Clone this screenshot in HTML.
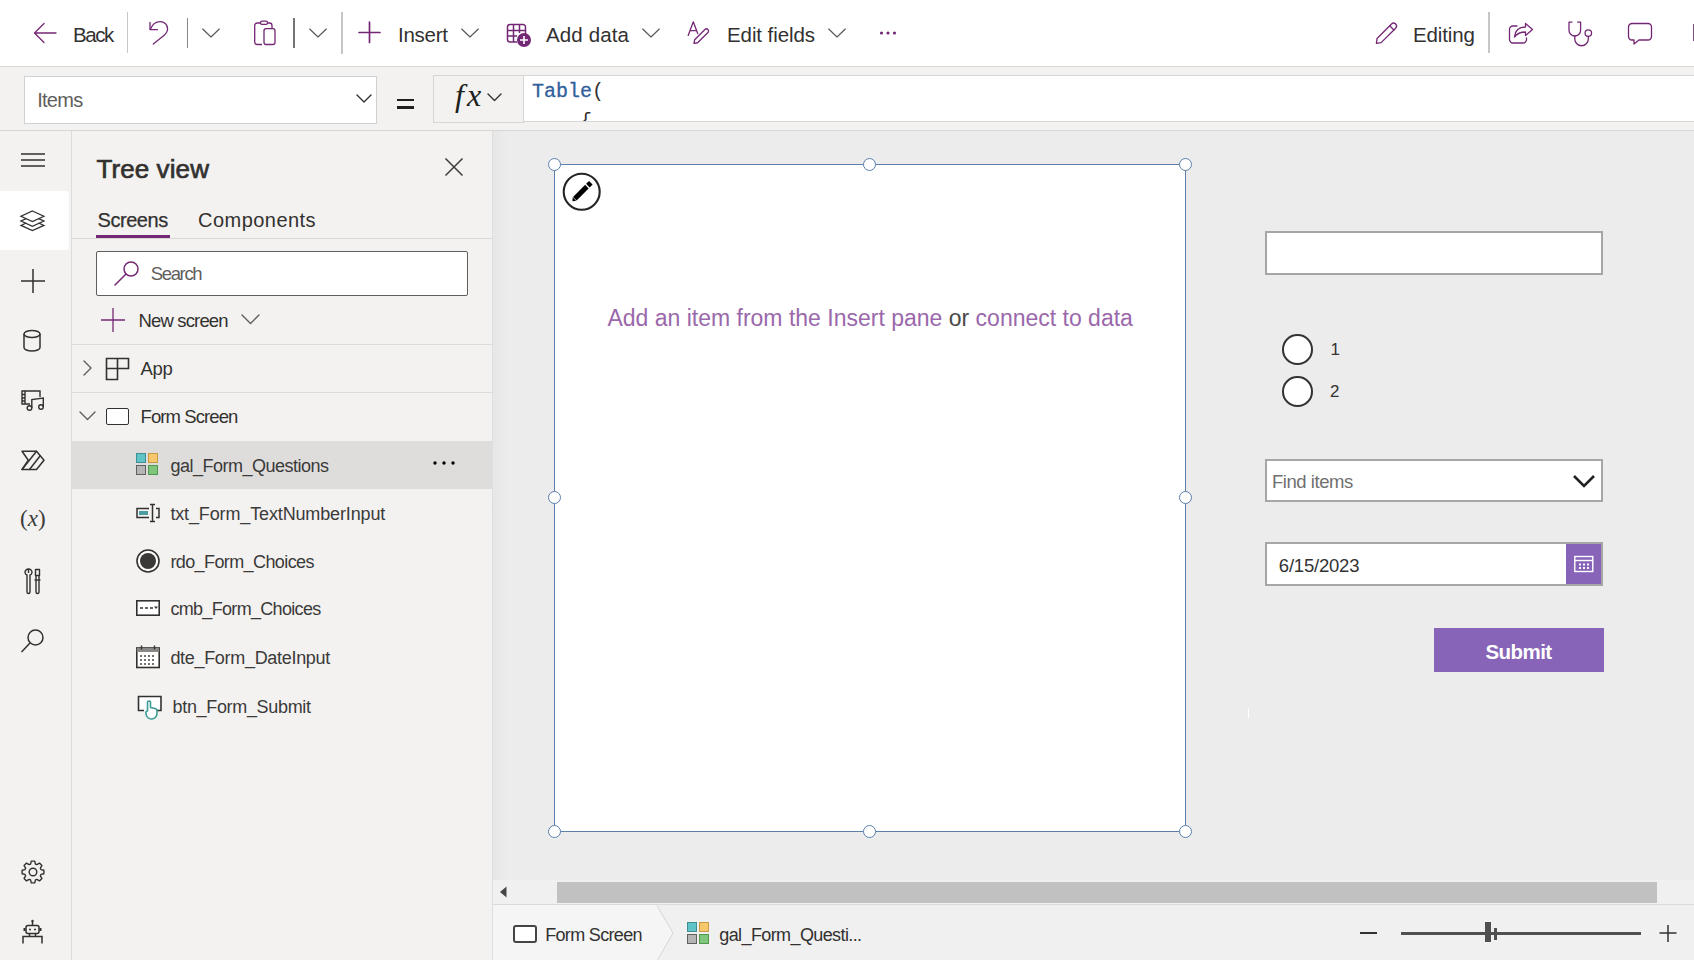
<!DOCTYPE html>
<html><head><meta charset="utf-8"><style>
html,body{margin:0;padding:0;}
body{width:1694px;height:960px;position:relative;overflow:hidden;background:#f3f2f1;font-family:"Liberation Sans",sans-serif;}
.r{position:absolute;box-sizing:content-box;}
.t{position:absolute;white-space:nowrap;line-height:1;}
svg.r{overflow:visible;}
</style></head><body>
<div class="r" style="left:0;top:0;width:1694px;height:66px;background:#fff"></div>
<div class="r" style="left:0;top:66px;width:1694px;height:1px;background:#d6d6d6"></div>
<div class="r" style="left:0;top:67px;width:1694px;height:63px;background:#f3f2f1"></div>
<div class="r" style="left:0;top:130px;width:1694px;height:1px;background:#d6d6d6"></div>
<div class="r" style="left:0;top:131px;width:71px;height:829px;background:#f3f2f1"></div>
<div class="r" style="left:71px;top:131px;width:1px;height:829px;background:#dcdcdc"></div>
<div class="r" style="left:72px;top:131px;width:420px;height:829px;background:#f3f2f1"></div>
<div class="r" style="left:492px;top:131px;width:1202px;height:829px;background:#ececec"></div>
<svg class="r" style="left:30px;top:18px;" width="30" height="30" viewBox="0 0 30 30" ><g fill="none" stroke="#742774" stroke-width="1.3" stroke-linecap="round" stroke-linejoin="round"><path d="M4.5 15H26M4.5 15L14 5.5M4.5 15L14 24.5"/></g></svg>
<div class="t" style="left:73.00px;top:24.64px;font-size:20.5px;color:#323130;font-weight:normal;font-family:'Liberation Sans', sans-serif;letter-spacing:-1.405px;">Back</div>
<div class="r" style="left:127px;top:12px;width:1px;height:41px;background:#c8c6c4"></div>
<svg class="r" style="left:145px;top:18px;" width="28" height="30" viewBox="0 0 28 30" ><g fill="none" stroke="#742774" stroke-width="1.3" stroke-linecap="round" stroke-linejoin="round"><path d="M5 4.3V11.7H12.5"/><path d="M5.5 11C7.5 6 11 3.6 15.2 3.6C19.5 3.6 22.6 7 22.6 11C22.6 13.5 21.6 15 19.5 17L8.3 26"/></g></svg>
<div class="r" style="left:187px;top:18px;width:1px;height:30px;background:#8a8886"></div>
<svg class="r" style="left:200px;top:26px;" width="22" height="14" viewBox="0 0 22 14" ><path d="M2.7 3L11 11L19.3 3" fill="none" stroke="#5a5856" stroke-width="1.15" stroke-linecap="round" stroke-linejoin="round"/></svg>
<svg class="r" style="left:250px;top:18px;" width="30" height="30" viewBox="0 0 30 30" ><g fill="none" stroke="#742774" stroke-width="1.3" stroke-linejoin="round"><path d="M10.5 5H7.2A2.5 2.5 0 0 0 4.7 7.5V24A2.5 2.5 0 0 0 7.2 26.5H12"/><path d="M17.5 5H19.5A2.5 2.5 0 0 1 22 7.5V10.5"/><rect x="10.5" y="3.2" width="7" height="3.2" rx="1.4"/><rect x="14" y="10.6" width="11" height="15.9" rx="2.2"/></g></svg>
<div class="r" style="left:293px;top:18px;width:2px;height:30px;background:#747474"></div>
<svg class="r" style="left:307px;top:26px;" width="22" height="14" viewBox="0 0 22 14" ><path d="M2.7 3L11 11L19.3 3" fill="none" stroke="#5a5856" stroke-width="1.15" stroke-linecap="round" stroke-linejoin="round"/></svg>
<div class="r" style="left:341px;top:12px;width:2px;height:42px;background:#c8c6c4"></div>
<svg class="r" style="left:355px;top:18px;" width="30" height="30" viewBox="0 0 30 30" ><g fill="none" stroke="#742774" stroke-width="1.7" stroke-linecap="round"><path d="M14.5 4V24.5M4 14.5H25"/></g></svg>
<div class="t" style="left:398.00px;top:24.64px;font-size:20.5px;color:#323130;font-weight:normal;font-family:'Liberation Sans', sans-serif;letter-spacing:-0.25px;">Insert</div>
<svg class="r" style="left:459px;top:26px;" width="22" height="14" viewBox="0 0 22 14" ><path d="M2.7 3L11 11L19.3 3" fill="none" stroke="#5a5856" stroke-width="1.15" stroke-linecap="round" stroke-linejoin="round"/></svg>
<svg class="r" style="left:504px;top:20px;" width="32" height="30" viewBox="0 0 32 30" ><g fill="none" stroke="#742774" stroke-width="1.5"><path d="M6 4.5H19A2.5 2.5 0 0 1 21.5 7V14M13 22H6A2.5 2.5 0 0 1 3.5 19.5V7A2.5 2.5 0 0 1 6 4.5M3.5 10.5H21.5M3.5 16H13M9.5 4.5V22M15.5 4.5V13"/></g><circle cx="20" cy="20" r="7" fill="#742774"/><path d="M20 16V24M16 20H24" stroke="#fff" stroke-width="1.6"/></svg>
<div class="t" style="left:546.00px;top:24.64px;font-size:20.5px;color:#323130;font-weight:normal;font-family:'Liberation Sans', sans-serif;letter-spacing:0.128px;">Add data</div>
<svg class="r" style="left:640px;top:26px;" width="22" height="14" viewBox="0 0 22 14" ><path d="M2.7 3L11 11L19.3 3" fill="none" stroke="#5a5856" stroke-width="1.15" stroke-linecap="round" stroke-linejoin="round"/></svg>
<svg class="r" style="left:685px;top:18px;" width="30" height="30" viewBox="0 0 30 30" ><g fill="none" stroke="#742774" stroke-width="1.3" stroke-linecap="round" stroke-linejoin="round"><path d="M3.2 17.4L8.3 3.8L12.7 15.6M5 12.7H11"/><path d="M0 0L3 -2.1H17.6A2.1 2.1 0 0 1 17.6 2.1H3Z" transform="translate(9 25.4) rotate(-45)"/></g></svg>
<div class="t" style="left:727.00px;top:24.64px;font-size:20.5px;color:#323130;font-weight:normal;font-family:'Liberation Sans', sans-serif;letter-spacing:-0.087px;">Edit fields</div>
<svg class="r" style="left:826px;top:26px;" width="22" height="14" viewBox="0 0 22 14" ><path d="M2.7 3L11 11L19.3 3" fill="none" stroke="#5a5856" stroke-width="1.15" stroke-linecap="round" stroke-linejoin="round"/></svg>
<svg class="r" style="left:878px;top:29px;" width="20" height="8" viewBox="0 0 20 8" ><g fill="#742774"><circle cx="3.5" cy="4" r="1.6"/><circle cx="10" cy="4" r="1.6"/><circle cx="16.5" cy="4" r="1.6"/></g></svg>
<svg class="r" style="left:1372px;top:18px;" width="30" height="30" viewBox="0 0 30 30" ><g fill="none" stroke="#742774" stroke-width="1.3" stroke-linecap="round" stroke-linejoin="round" transform="translate(4.4 25.3) rotate(-45)"><path d="M0 0L3.8 -2.9H24.3A2.9 2.9 0 0 1 24.3 2.9H3.8Z"/><path d="M21.8 -2.9V2.9"/></g></svg>
<div class="t" style="left:1413.00px;top:24.64px;font-size:20.5px;color:#323130;font-weight:normal;font-family:'Liberation Sans', sans-serif;letter-spacing:-0.122px;">Editing</div>
<div class="r" style="left:1488px;top:12px;width:2px;height:41px;background:#c8c6c4"></div>
<svg class="r" style="left:1506px;top:18px;" width="30" height="30" viewBox="0 0 30 30" ><g fill="none" stroke="#742774" stroke-width="1.3" stroke-linecap="round" stroke-linejoin="round"><path d="M11 8H7A3.5 3.5 0 0 0 3.5 11.5V21.5A3.5 3.5 0 0 0 7 25H17A3.5 3.5 0 0 0 20.5 21.5V20"/><path d="M19.5 5.5L26.5 11.5L19.5 17.5V14C14.5 14 11 15.5 8.5 19C9 12.5 12.5 9 19.5 9Z"/></g></svg>
<svg class="r" style="left:1565px;top:18.7px;" width="30" height="30" viewBox="0 0 30 30" ><g fill="none" stroke="#742774" stroke-width="1.3" stroke-linecap="round" stroke-linejoin="round"><path d="M7 3.1H4V11.2A5.8 5.8 0 0 0 15.6 11.2V3.1H12.6"/><path d="M9.8 17V20A6.75 6.75 0 0 0 23.3 20V17.4"/><circle cx="23.3" cy="14.1" r="3.25"/></g></svg>
<svg class="r" style="left:1625px;top:18px;" width="30" height="30" viewBox="0 0 30 30" ><path d="M7 5.5H23A3.5 3.5 0 0 1 26.5 9V18.5A3.5 3.5 0 0 1 23 22H14L9 26V22H7A3.5 3.5 0 0 1 3.5 18.5V9A3.5 3.5 0 0 1 7 5.5Z" fill="none" stroke="#742774" stroke-width="1.3" stroke-linejoin="round"/></svg>
<div class="r" style="left:1692.5px;top:24px;width:1.5px;height:17px;background:#7d4a7d"></div>
<div class="r" style="left:24px;top:76px;width:351px;height:46px;background:#fff;border:1px solid #d1d1d1"></div>
<div class="t" style="left:37.20px;top:90.07px;font-size:20px;color:#605e5c;font-weight:normal;font-family:'Liberation Sans', sans-serif;letter-spacing:-0.725px;">Items</div>
<svg class="r" style="left:354px;top:92px;" width="20" height="14" viewBox="0 0 20 14" ><path d="M3 3L10 10L17 3" fill="none" stroke="#323130" stroke-width="1.4" stroke-linecap="round" stroke-linejoin="round"/></svg>
<div class="r" style="left:397px;top:98.5px;width:17px;height:2.6px;background:#201f1e"></div>
<div class="r" style="left:397px;top:106px;width:17px;height:2.6px;background:#201f1e"></div>
<div class="r" style="left:433px;top:75px;width:89px;height:46px;background:#f3f2f1;border:1px solid #d6d6d6"></div>
<div class="t" style="left:455px;top:79px;font-family:'Liberation Serif',serif;font-style:italic;font-size:32px;color:#201f1e;line-height:1;letter-spacing:3px">fx</div>
<svg class="r" style="left:485px;top:91px;" width="20" height="14" viewBox="0 0 20 14" ><path d="M3 3L9.5 9.5L16 3" fill="none" stroke="#323130" stroke-width="1.4" stroke-linecap="round" stroke-linejoin="round"/></svg>
<div class="r" style="left:523px;top:75px;width:1171px;height:45px;background:#fff;border-top:1px solid #d6d6d6;border-bottom:1px solid #d6d6d6;border-left:1px solid #d6d6d6;overflow:hidden"><div class="t" style="left:8px;top:5.5px;font-family:'Liberation Mono',monospace;font-size:20px;line-height:1"><span style="color:#30609c;-webkit-text-stroke:0.3px #30609c">Table</span><span style="color:#323130">(</span></div><div class="t" style="left:56px;top:36px;font-family:'Liberation Mono',monospace;font-size:20px;line-height:1;color:#323130">{</div></div>
<svg class="r" style="left:20px;top:152px;" width="26" height="16" viewBox="0 0 26 16" ><path d="M1 2H25M1 8H25M1 14H25" stroke="#323130" stroke-width="1.3"/></svg>
<div class="r" style="left:0;top:191px;width:69px;height:59px;background:#fff;border-radius:0 4px 4px 0"></div>
<svg class="r" style="left:19px;top:208px;" width="28" height="26" viewBox="0 0 28 26" ><g fill="none" stroke="#323130" stroke-width="1.3" stroke-linejoin="miter"><path d="M13.4 3L24.9 8.25L13.4 13.5L2 8.25Z"/><path d="M7.2 10.6L2 13L13.4 18.25L24.9 13L19.6 10.6"/><path d="M7.2 15L2 17.4L13.4 22.65L24.9 17.4L19.6 15"/></g></svg>
<svg class="r" style="left:19px;top:267px;" width="28" height="28" viewBox="0 0 28 28" ><path d="M14 2V26M2 14H26" stroke="#323130" stroke-width="1.5"/></svg>
<svg class="r" style="left:21px;top:328px;" width="22" height="26" viewBox="0 0 22 26" ><g fill="none" stroke="#323130" stroke-width="1.5"><ellipse cx="11" cy="6" rx="8" ry="3.5"/><path d="M3 6V19.5C3 21.5 6.5 23 11 23C15.5 23 19 21.5 19 19.5V6"/></g></svg>
<svg class="r" style="left:19px;top:388px;" width="28" height="26" viewBox="0 0 28 26" ><g fill="none" stroke="#323130" stroke-width="1.4"><path d="M11 16H3V3H21V9"/><path d="M6 3V16M3 6.5H6M3 10H6M3 13H6"/><circle cx="10.5" cy="20" r="2.3"/><circle cx="22" cy="19" r="2.3"/><path d="M12.8 20V11.5L24.3 10V19"/></g></svg>
<svg class="r" style="left:19px;top:449px;" width="28" height="24" viewBox="0 0 28 24" ><g fill="none" stroke="#323130" stroke-width="1.5" stroke-linejoin="round" stroke-linecap="round"><path d="M3 2.3H17.5L25 11.2L17.5 20.5H3L9.3 11.2Z"/><path d="M17.5 2.3L3 20.5M21.2 6.8L10.5 20.5"/></g></svg>
<div class="t" style="left:20px;top:506.5px;font-family:'Liberation Serif',serif;font-size:23px;color:#3b3a39;line-height:1">(<i>x</i>)</div>
<svg class="r" style="left:22px;top:566px;" width="22" height="30" viewBox="0 0 22 30" ><g fill="none" stroke="#323130" stroke-width="1.4" stroke-linejoin="round"><path d="M5 9A3 3 0 0 1 3 6.5A3.5 3.5 0 0 1 6.5 3A3.5 3.5 0 0 1 10 6.5A3 3 0 0 1 8 9V26A1.5 1.5 0 0 1 5 26Z"/><path d="M6.5 3V7"/><path d="M13.5 3.5H17.5V9.5H13.5Z"/><path d="M14 9.5V26A1.5 1.5 0 0 0 17 26V9.5"/><path d="M12.5 14H18.5"/></g></svg>
<svg class="r" style="left:19px;top:627px;" width="28" height="28" viewBox="0 0 28 28" ><g fill="none" stroke="#323130" stroke-width="1.5"><circle cx="16.5" cy="10.5" r="7.5"/><path d="M11 16L2.5 25"/></g></svg>
<svg class="r" style="left:17.5px;top:857px;" width="30" height="30" viewBox="0 0 30 30" ><g fill="none" stroke="#323130" stroke-width="1.4" stroke-linejoin="round"><path d="M22.94 12.57 L25.86 13.28 L25.86 16.72 L22.94 17.43 L22.33 18.90 L23.90 21.47 L21.47 23.90 L18.90 22.33 L17.43 22.94 L16.72 25.86 L13.28 25.86 L12.57 22.94 L11.10 22.33 L8.53 23.90 L6.10 21.47 L7.67 18.90 L7.06 17.43 L4.14 16.72 L4.14 13.28 L7.06 12.57 L7.67 11.10 L6.10 8.53 L8.53 6.10 L11.10 7.67 L12.57 7.06 L13.28 4.14 L16.72 4.14 L17.43 7.06 L18.90 7.67 L21.47 6.10 L23.90 8.53 L22.33 11.10Z"/><circle cx="15" cy="15" r="3.8"/></g></svg>
<svg class="r" style="left:19px;top:918px;" width="28" height="28" viewBox="0 0 28 28" ><g fill="none" stroke="#323130" stroke-width="1.5"><path d="M13.5 3V7.5"/><rect x="7" y="7.5" width="13" height="8" rx="2"/><path d="M4 25.5V18.5H23V25.5"/><path d="M10.5 15.5V18.5M16.5 15.5V18.5"/></g><circle cx="13.5" cy="3" r="1.2" fill="#323130"/><circle cx="11" cy="11.5" r="1" fill="#323130"/><circle cx="16" cy="11.5" r="1" fill="#323130"/><path d="M5.5 10V13M21.5 10V13" stroke="#323130" stroke-width="2"/></svg>
<div class="t" style="left:96.40px;top:155.99px;font-size:26px;color:#323130;font-weight:normal;font-family:'Liberation Sans', sans-serif;letter-spacing:0.1px;-webkit-text-stroke:0.7px #323130;">Tree view</div>
<svg class="r" style="left:443px;top:156px;" width="22" height="22" viewBox="0 0 22 22" ><path d="M2.5 2.5L19.5 19.5M19.5 2.5L2.5 19.5" stroke="#3b3a39" stroke-width="1.5"/></svg>
<div class="t" style="left:97.60px;top:210.07px;font-size:20px;color:#323130;font-weight:normal;font-family:'Liberation Sans', sans-serif;letter-spacing:-0.467px;-webkit-text-stroke:0.25px #323130;">Screens</div>
<div class="t" style="left:198.00px;top:210.07px;font-size:20px;color:#323130;font-weight:normal;font-family:'Liberation Sans', sans-serif;letter-spacing:0.467px;">Components</div>
<div class="r" style="left:96px;top:235px;width:74px;height:3px;background:#742774"></div>
<div class="r" style="left:72px;top:238px;width:420px;height:1px;background:#d9d8d7"></div>
<div class="r" style="left:96px;top:251px;width:370px;height:43px;background:#fff;border:1px solid #605e5c;border-radius:2px"></div>
<svg class="r" style="left:112px;top:259px;" width="30" height="30" viewBox="0 0 30 30" ><g fill="none" stroke="#742774" stroke-width="1.5" stroke-linecap="round"><circle cx="19" cy="10" r="7"/><path d="M14 15L3 26"/></g></svg>
<div class="t" style="left:150.70px;top:265.34px;font-size:18.5px;color:#605e5c;font-weight:normal;font-family:'Liberation Sans', sans-serif;letter-spacing:-1.329px;">Search</div>
<svg class="r" style="left:99px;top:306px;" width="30" height="30" viewBox="0 0 30 30" ><path d="M14 2V26M2 14H26" stroke="#742774" stroke-width="1.3"/></svg>
<div class="t" style="left:138.50px;top:312.34px;font-size:18.5px;color:#323130;font-weight:normal;font-family:'Liberation Sans', sans-serif;letter-spacing:-0.842px;">New screen</div>
<svg class="r" style="left:240px;top:312px;" width="22" height="14" viewBox="0 0 22 14" ><path d="M2 3L10.5 11.5L19 3" fill="none" stroke="#605e5c" stroke-width="1.4" stroke-linecap="round" stroke-linejoin="round"/></svg>
<div class="r" style="left:72px;top:344px;width:420px;height:1px;background:#dcdbda"></div>
<svg class="r" style="left:80px;top:358px;" width="16" height="20" viewBox="0 0 16 20" ><path d="M4 3L11 10L4 17" fill="none" stroke="#605e5c" stroke-width="1.4" stroke-linecap="round" stroke-linejoin="round"/></svg>
<svg class="r" style="left:104px;top:356px;" width="27" height="26" viewBox="0 0 27 26" ><g fill="none" stroke="#323130" stroke-width="1.6"><path d="M2.5 2.5H24.5V12.5H13.5V23.5H2.5Z"/><path d="M13.5 2.5V12.5M2.5 12.5H13.5"/></g></svg>
<div class="t" style="left:140.60px;top:360.34px;font-size:18.5px;color:#323130;font-weight:normal;font-family:'Liberation Sans', sans-serif;letter-spacing:-0.365px;">App</div>
<div class="r" style="left:72px;top:392px;width:420px;height:1px;background:#dcdbda"></div>
<svg class="r" style="left:77px;top:408px;" width="22" height="16" viewBox="0 0 22 16" ><path d="M3 4L10.5 11.5L18 4" fill="none" stroke="#605e5c" stroke-width="1.4" stroke-linecap="round" stroke-linejoin="round"/></svg>
<div class="r" style="left:106px;top:408px;width:21px;height:15px;border:1.6px solid #323130;border-radius:2px;background:#fff"></div>
<div class="t" style="left:140.60px;top:408.34px;font-size:18.5px;color:#323130;font-weight:normal;font-family:'Liberation Sans', sans-serif;letter-spacing:-0.923px;">Form Screen</div>
<div class="r" style="left:72px;top:441px;width:420px;height:48px;background:#dedddc"></div>
<div class="r" style="left:136px;top:453px;width:10px;height:10px;background:#5fc4c8;border:1.5px solid #3f8f93;box-sizing:border-box"></div><div class="r" style="left:148px;top:453px;width:10px;height:10px;background:#f6c86b;border:1.5px solid #c99a45;box-sizing:border-box"></div><div class="r" style="left:136px;top:465px;width:10px;height:10px;background:#b5b5b5;border:1.5px solid #606060;box-sizing:border-box"></div><div class="r" style="left:148px;top:465px;width:10px;height:10px;background:#7fc57c;border:1.5px solid #4f9a4d;box-sizing:border-box"></div>
<div class="t" style="left:170.40px;top:456.76px;font-size:18px;color:#3b3a39;font-weight:normal;font-family:'Liberation Sans', sans-serif;letter-spacing:-0.502px;">gal_Form_Questions</div>
<svg class="r" style="left:430px;top:459px;" width="28" height="8" viewBox="0 0 28 8" ><g fill="#000"><circle cx="5" cy="4" r="1.7"/><circle cx="14" cy="4" r="1.7"/><circle cx="23" cy="4" r="1.7"/></g></svg>
<svg class="r" style="left:134px;top:502px;" width="28" height="22" viewBox="0 0 28 22" ><g fill="none" stroke="#323130" stroke-width="1.5"><path d="M15 6.5H3V15.5H15"/><path d="M22 6.5H25V15.5H22"/><path d="M18.5 3V19M16 2.5H21M16 19.5H21"/></g><rect x="5" y="9" width="9" height="4" fill="#4a9ca0"/></svg>
<div class="t" style="left:170.40px;top:505.26px;font-size:18px;color:#3b3a39;font-weight:normal;font-family:'Liberation Sans', sans-serif;letter-spacing:-0.138px;">txt_Form_TextNumberInput</div>
<svg class="r" style="left:134px;top:547px;" width="28" height="28" viewBox="0 0 28 28" ><circle cx="14" cy="14" r="11" fill="#fff" stroke="#323130" stroke-width="1.6"/><circle cx="14" cy="14" r="8" fill="#3b3a39"/></svg>
<div class="t" style="left:170.40px;top:552.76px;font-size:18px;color:#3b3a39;font-weight:normal;font-family:'Liberation Sans', sans-serif;letter-spacing:-0.599px;">rdo_Form_Choices</div>
<svg class="r" style="left:134px;top:598px;" width="28" height="20" viewBox="0 0 28 20" ><rect x="2.8" y="2.8" width="22.4" height="14.4" fill="#fff" stroke="#323130" stroke-width="1.6"/><path d="M6 10H9M11 10H14M16 10H19" stroke="#323130" stroke-width="1.4"/><path d="M20 8.5H24L22 11Z" fill="#323130"/></svg>
<div class="t" style="left:170.40px;top:600.26px;font-size:18px;color:#3b3a39;font-weight:normal;font-family:'Liberation Sans', sans-serif;letter-spacing:-0.68px;">cmb_Form_Choices</div>
<svg class="r" style="left:134px;top:643px;" width="28" height="26" viewBox="0 0 28 26" ><rect x="2.8" y="5" width="22.4" height="19.5" fill="#fff" stroke="#323130" stroke-width="1.6"/><rect x="2.8" y="5" width="22.4" height="4" fill="#8a8886"/><path d="M7.5 2.5V6.5M20.5 2.5V6.5" stroke="#323130" stroke-width="1.4"/><g fill="#323130"><circle cx="7" cy="13" r=".9"/><circle cx="11" cy="13" r=".9"/><circle cx="15" cy="13" r=".9"/><circle cx="19" cy="13" r=".9"/><circle cx="7" cy="17" r=".9"/><circle cx="11" cy="17" r=".9"/><circle cx="15" cy="17" r=".9"/><circle cx="19" cy="17" r=".9"/><circle cx="7" cy="21" r=".9"/><circle cx="11" cy="21" r=".9"/><circle cx="15" cy="21" r=".9"/><circle cx="19" cy="21" r=".9"/></g></svg>
<div class="t" style="left:170.40px;top:648.56px;font-size:18px;color:#3b3a39;font-weight:normal;font-family:'Liberation Sans', sans-serif;letter-spacing:-0.309px;">dte_Form_DateInput</div>
<svg class="r" style="left:135px;top:693px;" width="30" height="28" viewBox="0 0 30 28" ><path d="M9 17.5H3.5V3.5H26V17.5H22" fill="#fff" stroke="#323130" stroke-width="1.6"/><path d="M12.5 18V9.5A1.5 1.5 0 0 1 15.5 9.5V14.5L20 15.5A2.5 2.5 0 0 1 22 18V20A5.5 5.5 0 0 1 11 21V19A1.5 1.5 0 0 1 12.5 18Z" fill="#fff" stroke="#3a9c96" stroke-width="1.6" stroke-linejoin="round"/></svg>
<div class="t" style="left:172.60px;top:697.76px;font-size:18px;color:#3b3a39;font-weight:normal;font-family:'Liberation Sans', sans-serif;letter-spacing:-0.336px;">btn_Form_Submit</div>
<div class="r" style="left:492px;top:131px;width:16px;height:749px;background:linear-gradient(90deg,#e6e6e6,#ececec)"></div>
<div class="r" style="left:554px;top:164px;width:630px;height:666px;background:#fff;border:1px solid #5b80ad"></div>
<div class="r" style="left:548px;top:157.5px;width:11px;height:11px;border:1.5px solid #5b80ad;border-radius:50%;background:#fff"></div>
<div class="r" style="left:863px;top:157.5px;width:11px;height:11px;border:1.5px solid #5b80ad;border-radius:50%;background:#fff"></div>
<div class="r" style="left:1178.5px;top:157.5px;width:11px;height:11px;border:1.5px solid #5b80ad;border-radius:50%;background:#fff"></div>
<div class="r" style="left:548px;top:490.5px;width:11px;height:11px;border:1.5px solid #5b80ad;border-radius:50%;background:#fff"></div>
<div class="r" style="left:1178.5px;top:490.5px;width:11px;height:11px;border:1.5px solid #5b80ad;border-radius:50%;background:#fff"></div>
<div class="r" style="left:548px;top:825px;width:11px;height:11px;border:1.5px solid #5b80ad;border-radius:50%;background:#fff"></div>
<div class="r" style="left:863px;top:825px;width:11px;height:11px;border:1.5px solid #5b80ad;border-radius:50%;background:#fff"></div>
<div class="r" style="left:1178.5px;top:825px;width:11px;height:11px;border:1.5px solid #5b80ad;border-radius:50%;background:#fff"></div>
<svg class="r" style="left:560px;top:170px;" width="44" height="44" viewBox="0 0 44 44" ><circle cx="21.7" cy="21.7" r="18" fill="#fff" stroke="#252525" stroke-width="2.1"/><g fill="#000" transform="translate(21.5 22) rotate(-45) translate(-13 0)"><path d="M0 0.2L3 -2.5V2.5Z"/><rect x="3.6" y="-2.5" width="17" height="5"/><rect x="22" y="-2.5" width="4.2" height="5"/></g></svg>
<div class="t" style="left:607.40px;top:306.93px;font-size:23px;color:#8b57a0;font-weight:normal;font-family:'Liberation Sans', sans-serif;letter-spacing:0px;"><span style="color:#9a68ab">Add an item from the Insert pane</span> <span style="color:#4a4948">or</span> <span style="color:#9a68ab">connect to data</span></div>
<div class="r" style="left:1265px;top:231px;width:334px;height:40px;background:#fff;border:2px solid #a6a6a6"></div>
<div class="r" style="left:1282px;top:334.3px;width:26.5px;height:26.5px;border:2.5px solid #333;border-radius:50%;background:#fff"></div>
<div class="r" style="left:1282px;top:376.3px;width:26.5px;height:26.5px;border:2.5px solid #333;border-radius:50%;background:#fff"></div>
<div class="t" style="left:1330.50px;top:341.31px;font-size:17px;color:#333;font-weight:normal;font-family:'Liberation Sans', sans-serif;letter-spacing:-3.935px;">1</div>
<div class="t" style="left:1330.00px;top:383.31px;font-size:17px;color:#333;font-weight:normal;font-family:'Liberation Sans', sans-serif;letter-spacing:-1.935px;">2</div>
<div class="r" style="left:1265px;top:459px;width:334px;height:39px;background:#fff;border:2px solid #a6a6a6"></div>
<div class="t" style="left:1272.00px;top:472.64px;font-size:18.5px;color:#707070;font-weight:normal;font-family:'Liberation Sans', sans-serif;letter-spacing:-0.454px;">Find items</div>
<svg class="r" style="left:1570px;top:472px;" width="28" height="18" viewBox="0 0 28 18" ><path d="M4 4L14 14L24 4" fill="none" stroke="#222" stroke-width="2.6"/></svg>
<div class="r" style="left:1265px;top:542px;width:334px;height:40px;background:#fff;border:2px solid #a6a6a6"></div>
<div class="r" style="left:1566px;top:544px;width:35px;height:40px;background:#8764b8"></div>
<svg class="r" style="left:1572px;top:553px;" width="24" height="22" viewBox="0 0 24 22" ><g fill="none" stroke="#fff" stroke-width="1.4"><rect x="2.8" y="3.5" width="18" height="15"/><path d="M2.8 7.5H20.8"/></g><g fill="#fff"><rect x="7" y="10.5" width="2" height="2"/><rect x="11" y="10.5" width="2" height="2"/><rect x="15" y="10.5" width="2" height="2"/><rect x="7" y="14" width="2" height="2"/><rect x="11" y="14" width="2" height="2"/><rect x="15" y="14" width="2" height="2"/></g></svg>
<div class="t" style="left:1278.80px;top:556.54px;font-size:18.5px;color:#333;font-weight:normal;font-family:'Liberation Sans', sans-serif;letter-spacing:-0.203px;">6/15/2023</div>
<div class="r" style="left:1434px;top:628px;width:170px;height:44px;background:#8764b8"></div>
<div class="t" style="left:1485.50px;top:641.54px;font-size:20.5px;color:#fff;font-weight:bold;font-family:'Liberation Sans', sans-serif;letter-spacing:-0.559px;">Submit</div>
<div class="r" style="left:1248px;top:708px;width:1px;height:9.5px;background:#fff"></div>
<div class="r" style="left:492px;top:880px;width:1202px;height:24px;background:#f0f0f0"></div>
<svg class="r" style="left:498px;top:885px;" width="12" height="14" viewBox="0 0 12 14" ><path d="M8.5 1.5V12.5L2 7Z" fill="#444"/></svg>
<div class="r" style="left:557px;top:882px;width:1100px;height:21px;background:#c1c1c1"></div>
<div class="r" style="left:492px;top:904px;width:1202px;height:1px;background:#dadada"></div>
<div class="r" style="left:492px;top:905px;width:1202px;height:55px;background:#f0f0f0"></div>
<svg class="r" style="left:492px;top:905px;" width="190" height="55" viewBox="0 0 190 55" ><path d="M0 0H165L181 28L165 56H0Z" fill="#f5f5f5"/><path d="M165 0.5L181 28L165 56" fill="none" stroke="#d6d6d6" stroke-width="1"/></svg>
<div class="r" style="left:513px;top:925px;width:20px;height:14px;border:2px solid #444;border-radius:3px;background:#fff"></div>
<div class="t" style="left:545.20px;top:925.96px;font-size:18px;color:#323130;font-weight:normal;font-family:'Liberation Sans', sans-serif;letter-spacing:-0.674px;">Form Screen</div>
<div class="r" style="left:687px;top:922px;width:10px;height:10px;background:#5fc4c8;border:1.5px solid #3f8f93;box-sizing:border-box"></div><div class="r" style="left:699px;top:922px;width:10px;height:10px;background:#f6c86b;border:1.5px solid #c99a45;box-sizing:border-box"></div><div class="r" style="left:687px;top:934px;width:10px;height:10px;background:#b5b5b5;border:1.5px solid #606060;box-sizing:border-box"></div><div class="r" style="left:699px;top:934px;width:10px;height:10px;background:#7fc57c;border:1.5px solid #4f9a4d;box-sizing:border-box"></div>
<div class="t" style="left:719.30px;top:925.66px;font-size:18px;color:#323130;font-weight:normal;font-family:'Liberation Sans', sans-serif;letter-spacing:-0.605px;">gal_Form_Questi...</div>
<div class="r" style="left:1360px;top:932px;width:17px;height:1.5px;background:#323130"></div>
<div class="r" style="left:1401px;top:932px;width:240px;height:3px;background:#505050"></div>
<div class="r" style="left:1485px;top:922px;width:6px;height:20px;background:#505050"></div>
<div class="r" style="left:1493.5px;top:928px;width:3px;height:12px;background:#505050"></div>
<svg class="r" style="left:1658px;top:923px;" width="20" height="20" viewBox="0 0 20 20" ><path d="M10 2V19M1.5 10H18.5" stroke="#323130" stroke-width="1.5"/></svg>
<div class="r" style="left:492px;top:131px;width:1px;height:829px;background:#dedede"></div>
</body></html>
